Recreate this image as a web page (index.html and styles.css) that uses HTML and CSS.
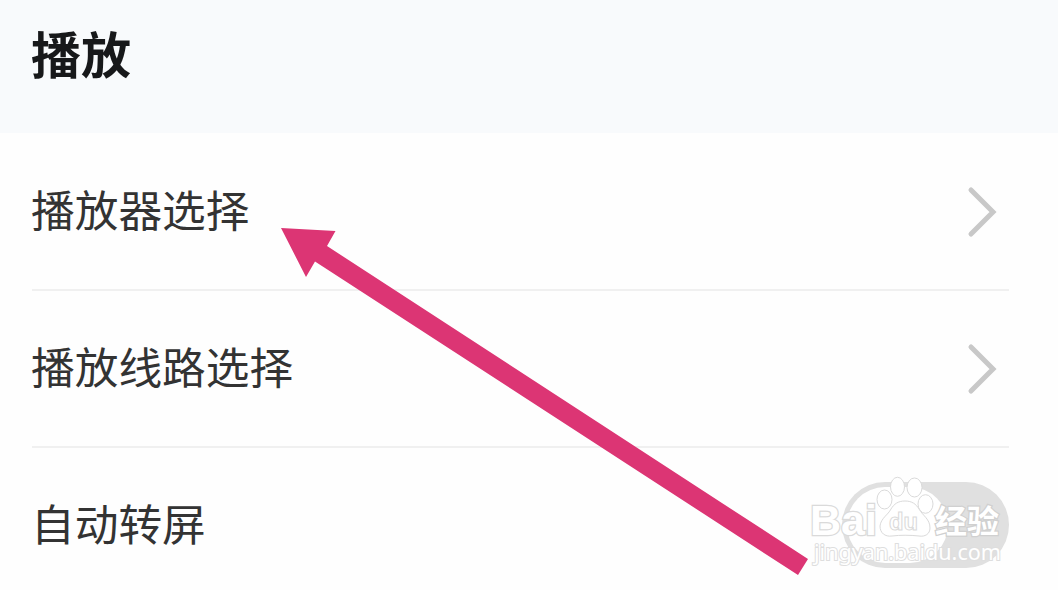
FILE: index.html
```
<!DOCTYPE html>
<html lang="zh-CN">
<head>
    <meta charset="UTF-8">
    <meta name="viewport" content="width=device-width, initial-scale=1.0">
    <title>播放设置</title>
    <link rel="stylesheet" href="styles.css">
</head>
<body>

<div class="screen">
    <div class="header">
        <h1>播放</h1>
    </div>

    <ul class="settings">
        <li class="row">
            <span class="label">播放器选择</span>
            <svg class="chevron" viewBox="0 0 32 52"><path d="M4 4 L26 26 L4 48"/></svg>
        </li>
        <li class="row">
            <span class="label">播放线路选择</span>
            <svg class="chevron" viewBox="0 0 32 52"><path d="M4 4 L26 26 L4 48"/></svg>
        </li>
        <li class="row">
            <span class="label">自动转屏</span>
            <span class="toggle"><span class="knob"></span></span>
        </li>
    </ul>

    <!-- watermark -->
    <svg class="watermark" viewBox="0 0 220 110">
        <g class="logo">
            <text class="brand" x="12" y="65" textLength="67" lengthAdjust="spacingAndGlyphs">Bai</text>
            <ellipse cx="86.500" cy="29.500" rx="7.500" ry="9.500"/>
            <ellipse cx="99.500" cy="16.800" rx="7" ry="9.500"/>
            <ellipse cx="116.500" cy="17.500" rx="7.500" ry="9.500"/>
            <ellipse cx="127.500" cy="34" rx="7.500" ry="9.300"/>
            <path d="M107 31 C114 31 118 34 121 39 C125 46 132 49 132 58 C132 64 127 67 121 66 C112 65 102 65 94 66 C87 67 82 63 82 56 C83 48 90 45 93 39 C96 34 100 31 107 31 Z"/>
            <text class="du" x="91" y="60" textLength="29" lengthAdjust="spacingAndGlyphs">du</text>
            <text class="cjk" x="137" y="63" textLength="64">经验</text>
        </g>
        <text class="url" x="16" y="90" textLength="187" lengthAdjust="spacingAndGlyphs">jingyan.baidu.com</text>
    </svg>

    <!-- pointer arrow -->
    <svg class="arrow" viewBox="0 0 1058 590">
        <polygon points="281,228 335.500,231 327,246 808,559 798,575 315,261.500 306,277"/>
    </svg>
</div>

</body>
</html>
```

FILE: styles.css
```
* {
    box-sizing: border-box;
    margin: 0;
    padding: 0;
}

body {
    font-family: "Noto Sans CJK SC", sans-serif;
    background-color: #fefefe;
    color: #333;
}

.screen {
    position: relative;
    height: 590px;
    overflow: hidden;
}

.header {
    height: 133px;
    padding: 15px 31px 0;
    background-color: #f8fafc;
}

h1 {
    font-size: 50px;
    font-weight: bold;
    line-height: 74px;
    color: #17181a;
}

.settings {
    list-style: none;
    padding: 1px 49px 0 32px;
}

.row {
    display: flex;
    align-items: center;
    justify-content: space-between;
    height: 157px;
    border-bottom: 2px solid #f0f0f0;
}

.row:last-child {
    border-bottom: none;
}

.label {
    margin-left: -1px;
    padding-bottom: 7px;
    font-size: 43.7px;
    line-height: 64px;
}

.row:last-child .label {
    padding-bottom: 9px;
}

.chevron {
    width: 32px;
    height: 52px;
    margin-right: 10px;
    fill: none;
    stroke: #c8c8c8;
    stroke-width: 5;
    stroke-linecap: round;
}

.toggle {
    width: 167px;
    height: 86px;
    margin-top: -3px;
    padding: 5px;
    border-radius: 43px;
    background-color: #e0e0e0;
}

.knob {
    display: block;
    width: 101px;
    height: 76px;
    border-radius: 38px;
    background-color: #fff;
}

.watermark {
    position: absolute;
    left: 798px;
    top: 470px;
    width: 220px;
    height: 110px;
    fill: #fff;
    stroke: #dadada;
    stroke-width: 1;
}

.brand {
    font: bold 43px "Liberation Sans", sans-serif;
    stroke-width: 2.5;
    paint-order: stroke;
}

.du {
    font: bold 23px "Liberation Sans", sans-serif;
}

.cjk {
    font-size: 32px;
    font-weight: bold;
    stroke: #d0d0d0;
    stroke-width: 2.5;
    paint-order: stroke;
}

.url {
    font: 21px "Noto Sans", sans-serif;
    stroke: #dedede;
    stroke-width: 2;
    paint-order: stroke;
}

.arrow {
    position: absolute;
    left: 0;
    top: 0;
    width: 1058px;
    height: 590px;
    fill: #dc3574;
}
```
